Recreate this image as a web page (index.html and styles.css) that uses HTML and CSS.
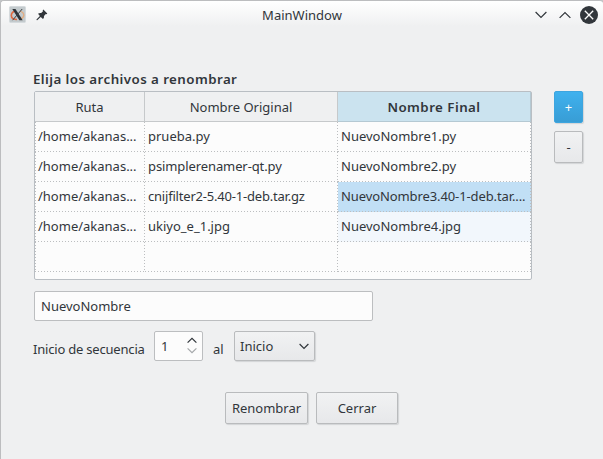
FILE: index.html
```html
<!DOCTYPE html>
<html lang="es">
<head>
<meta charset="utf-8">
<title>MainWindow</title>
<link rel="stylesheet" href="styles.css">
</head>
<body>
<div class="window">
  <header class="titlebar">
    <svg class="app-icon" width="18" height="18" viewBox="0 0 18 18">
      <rect x=".5" y=".5" width="16" height="16" rx="1" fill="#c3cacd" stroke="#d5dadd"/>
      <path d="M7 5Q2.500 5.500 2.300 9.500Q2.500 13.500 8 13.500" fill="none" stroke="#e0693f" stroke-width="1.600"/>
      <path d="M11 5Q15 6.500 14.800 9.500Q14 13 10 13.300" fill="none" stroke="#e2ac81" stroke-width="1.300"/>
      <path d="M3.300 3H6.500L13.700 14.200H10.400Z" fill="#2e3337"/>
      <path d="M13.200 3L3.600 14.200" stroke="#3a3f43" stroke-width="1"/>
    </svg>
    <svg class="pin" width="12" height="12" viewBox="0 0 12 12">
      <path d="M7.300.5L11.300 4.500L10.600 5.300L9.800 5L8 7Q8.300 9 7 10L4.700 7.900L1.200 11.200L.4 10.900L.7 10.200L3.900 7L2 4.800Q3.500 3.600 5.200 4L7 2.300L6.700 1.300Z" fill="#31363b"/>
    </svg>
    <span class="title">MainWindow</span>
    <div class="controls">
      <svg width="12" height="8" viewBox="0 0 12 8"><path d="M.6 1L6 6.400L11.400 1"/></svg>
      <svg width="12" height="8" viewBox="0 0 12 8"><path d="M.6 6.900L6 1.500L11.400 6.900"/></svg>
      <svg width="18" height="18" viewBox="0 0 18 18"><circle cx="9" cy="9" r="9"/><path class="cross" d="M4.800 4.800L13.200 13.200M13.200 4.800L4.800 13.200"/></svg>
    </div>
  </header>
  <main class="content">
    <h1 class="heading">Elija los archivos a renombrar</h1>
    <div class="files">
      <div class="table">
        <div class="row head"><div class="cell">Ruta</div><div class="cell">Nombre Original</div><div class="cell current">Nombre Final</div></div>
        <div class="row"><div class="cell">/home/akanas...</div><div class="cell">prueba.py</div><div class="cell">NuevoNombre1.py</div></div>
        <div class="row"><div class="cell">/home/akanas...</div><div class="cell snug">psimplerenamer-qt.py</div><div class="cell">NuevoNombre2.py</div></div>
        <div class="row"><div class="cell">/home/akanas...</div><div class="cell tight">cnijfilter2-5.40-1-deb.tar.gz</div><div class="cell selected snug">NuevoNombre3.40-1-deb.tar....</div></div>
        <div class="row"><div class="cell">/home/akanas...</div><div class="cell">ukiyo_e_1.jpg</div><div class="cell hover">NuevoNombre4.jpg</div></div>
        <div class="row"><div class="cell"></div><div class="cell"></div><div class="cell"></div></div>
      </div>
      <div class="side">
        <button class="btn add">+</button>
        <button class="btn">-</button>
      </div>
    </div>
    <div class="field name">NuevoNombre</div>
    <div class="sequence">
      <span class="label start tight">Inicio de secuencia</span>
      <div class="field spin">1
        <svg width="10" height="18" viewBox="0 0 10 18"><path d="M.6 5.700L5 1.300L9.400 5.700"/><path class="off" d="M.6 11.300L5 15.700L9.400 11.300"/></svg>
      </div>
      <span class="label to">al</span>
      <div class="btn combo">Inicio
        <svg width="10" height="7" viewBox="0 0 10 7"><path d="M.6 1L5 5.400L9.400 1"/></svg>
      </div>
    </div>
    <div class="actions">
      <button class="btn">Renombrar</button>
      <button class="btn close">Cerrar</button>
    </div>
  </main>
</div>
</body>
</html>
```
FILE: styles.css
```css
* { box-sizing: border-box; }

body {
  margin: 0;
  background: #c4c6c8;
  color: #31363b;
  font: 13px/18px "Noto Sans", sans-serif;
}

.window {
  height: 459px;
  border: solid #bcbdbf;
  border-width: 1px 0 0 1px;
  border-radius: 4px 4px 0 0;
  background: #eff0f1;
  overflow: hidden;
}

.titlebar {
  display: flex;
  align-items: center;
  height: 28px;
  padding: 0 5px 0 8px;
  background: linear-gradient(#fff, #eff0f1 90%);
}

.pin { margin-left: 9px; }

.title {
  flex: 1;
  padding-left: 21px;
  text-align: center;
}

.controls {
  display: flex;
  align-items: center;
  gap: 12px;
}

.controls svg:last-child { margin-left: -3px; }

svg path { stroke-linecap: butt; }

.controls path,
.spin path,
.combo path {
  fill: none;
  stroke: #31363b;
  stroke-width: 1.2;
}

.controls circle { fill: #31363b; }
.controls .cross { stroke: #fcfcfc; stroke-width: 1.3; }

.content { padding: 41px 0 0 32px; }

.heading {
  margin: 0;
  font-size: 13.33px;
  font-weight: 600;
  line-height: 18px;
  letter-spacing: .43px;
}

.files {
  display: flex;
  gap: 22px;
  margin: 3px 0 0 1px;
}

.table {
  width: 498px;
  height: 189px;
  border: 1px solid #b9bec3;
  border-radius: 2px;
  background: #fcfcfc;
}

.row {
  display: grid;
  grid-template-columns: 110px 193px 193px;
  height: 30px;
}

.cell {
  padding: 5px 0 0 3px;
  background:
    repeating-linear-gradient(90deg, #bcbec0 0 1px, transparent 1px 3px) 0 100% / 100% 1px no-repeat,
    repeating-linear-gradient(#bcbec0 0 1px, transparent 1px 3px) 100% 0 / 1px 100% no-repeat;
  white-space: nowrap;
}

.row:not(.head) .cell:first-child {
  background:
    repeating-linear-gradient(90deg, #bcbec0 0 1px, transparent 1px 3px) 0 100% / 100% 1px no-repeat,
    repeating-linear-gradient(#bcbec0 0 1px, transparent 1px 3px) 100% 0 / 1px 100% no-repeat,
    repeating-linear-gradient(#bcbec0 0 1px, transparent 1px 3px) 0 0 / 1px 100% no-repeat;
}

.row .selected { background-color: #c1dff5; }
.row .hover { background-color: #f2f7fc; }

.tight { letter-spacing: -.2px; }
.snug { letter-spacing: -.1px; }

.head .cell {
  padding: 6px 0 0;
  border: solid #c6c9cb;
  border-width: 0 1px 1px 0;
  background: #eff0f1;
  text-align: center;
}

.head .current {
  border-color: #b5c9d3;
  background: #cbe3ef;
  font-size: 13.33px;
  font-weight: 600;
  letter-spacing: .45px;
}

.side {
  display: flex;
  flex-direction: column;
  gap: 8px;
}

.side .btn {
  width: 29px;
  height: 32px;
}

.btn {
  display: flex;
  align-items: center;
  justify-content: center;
  padding: 0;
  border: 1px solid #b9bbbd;
  border-radius: 2px;
  background: linear-gradient(#f1f2f3, #e7e8ea);
  box-shadow: 1px 1px 1px #d2d4d6;
  color: inherit;
  font: inherit;
}

.side .add {
  border-color: #3da5df;
  background: linear-gradient(#3fb1ee, #389dd5);
  color: #fcfcfc;
}

.field {
  display: flex;
  align-items: center;
  height: 30px;
  border: 1px solid #bcbec0;
  border-radius: 2px;
  background: #fcfcfc;
}

.name {
  width: 339px;
  margin: 11px 0 0 1px;
  padding-left: 6px;
}

.sequence {
  display: flex;
  margin-top: 10px;
}

.label { padding-top: 9px; }
.start { width: 121px; }

.spin {
  justify-content: space-between;
  width: 49px;
  padding: 0 5px 0 6px;
}

.spin .off { stroke: #a5a8aa; }

.to {
  width: 31px;
  padding-left: 10px;
}

.combo {
  justify-content: space-between;
  width: 81px;
  height: 30px;
  padding: 0 5px;
}

.actions {
  display: flex;
  gap: 8px;
  margin: 31px 0 0 192px;
}

.actions .btn {
  width: 83px;
  height: 32px;
}

.actions .close { width: 82px; }
```
